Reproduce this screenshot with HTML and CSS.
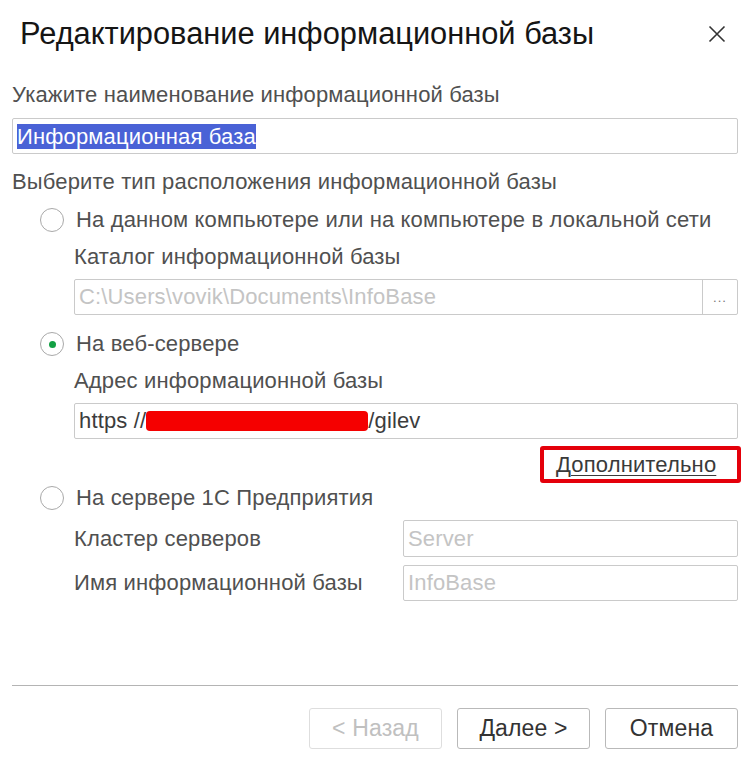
FILE: index.html
```html
<!DOCTYPE html>
<html lang="ru">
<head>
  <meta charset="UTF-8" />
  <title>Редактирование информационной базы</title>
  <link rel="stylesheet" href="styles.css">
</head>
<body>
  <div class="dialog">
    <!-- Заголовок окна -->
    <div class="header">
      <h1 class="title">Редактирование информационной базы</h1>
      <span class="close">
        <svg width="18" height="18" viewBox="0 0 18 18">
          <path d="M1.5 1.5 L16.5 16.5 M16.5 1.5 L1.5 16.5" stroke="#333" stroke-width="1.6" fill="none"/>
        </svg>
      </span>
    </div>

    <div class="caption">Укажите наименование информационной базы</div>
    <div class="field name-field"><span class="selected">Информационная база</span></div>

    <div class="caption caption-type">Выберите тип расположения информационной базы</div>

    <!-- Вариант 1: файловая база -->
    <div class="radio-row row-file">
      <span class="radio"></span>
      <span class="radio-text">На данном компьютере или на компьютере в локальной сети</span>
    </div>
    <div class="sub">
      <div class="caption sub-caption">Каталог информационной базы</div>
      <div class="field field-choice">
        <span class="value disabled">C:\Users\vovik\Documents\InfoBase</span>
        <span class="choice-btn">...</span>
      </div>
    </div>

    <!-- Вариант 2: веб-сервер -->
    <div class="radio-row row-web">
      <span class="radio checked"></span>
      <span class="radio-text">На веб-сервере</span>
    </div>
    <div class="sub">
      <div class="caption sub-caption">Адрес информационной базы</div>
      <div class="field address-field">https //<span class="redact"></span>/gilev</div>
      <div class="more-row">
        <span class="more-box"><a class="more" href="#">Дополнительно</a></span>
      </div>
    </div>

    <!-- Вариант 3: сервер 1С -->
    <div class="radio-row row-server">
      <span class="radio"></span>
      <span class="radio-text">На сервере 1С Предприятия</span>
    </div>
    <div class="sub">
      <div class="pair pair-first">
        <span class="pair-label">Кластер серверов</span>
        <div class="field pair-field"><span class="disabled">Server</span></div>
      </div>
      <div class="pair">
        <span class="pair-label">Имя информационной базы</span>
        <div class="field pair-field"><span class="disabled">InfoBase</span></div>
      </div>
    </div>

    <div class="separator"></div>

    <div class="buttons">
      <span class="btn btn-disabled">&lt; Назад</span>
      <span class="btn">Далее &gt;</span>
      <span class="btn">Отмена</span>
    </div>
  </div>
</body>
</html>
```

FILE: styles.css
```css
/* Окно редактирования базы */
body {
  margin: 0;
  background: #fff;
  font-family: "Liberation Sans", Arial, sans-serif;
  color: #505050;
  letter-spacing: 0.15px;
}

.dialog {
  width: 750px;
  height: 763px;
  padding: 0 12px;
  box-sizing: border-box;
}

.header {
  height: 80px;
  display: flex;
  align-items: flex-start;
  justify-content: space-between;
}

.title {
  margin: 16px 0 0 8px;
  font-size: 30.8px;
  line-height: 36px;
  font-weight: normal;
  color: #151515;
  letter-spacing: 0;
}

.close {
  margin: 25px 12px 0 0;
  width: 18px;
  height: 18px;
}

.caption {
  font-size: 22px;
  line-height: 30px;
  height: 30px;
  white-space: nowrap;
}

.field {
  height: 36px;
  border: 1px solid #cacaca;
  border-radius: 2px;
  box-sizing: border-box;
  display: flex;
  align-items: center;
  padding: 0 4px;
  font-size: 22px;
  color: #3c3c3c;
  white-space: nowrap;
}

.name-field {
  margin-top: 8px;
}

.selected {
  background: #4a62d6;
  color: #fff;
  line-height: 25px;
}

.caption-type {
  margin-top: 13px;
}

.radio-row {
  height: 30px;
  display: flex;
  align-items: center;
  padding-left: 28px;
}

.row-file {
  margin-top: 8px;
}

.row-web {
  margin-top: 14px;
}

.radio {
  width: 24px;
  height: 24px;
  border: 1.5px solid #a9a9a9;
  border-radius: 50%;
  box-sizing: border-box;
  display: flex;
  align-items: center;
  justify-content: center;
  margin-right: 12px;
}

.radio.checked::after {
  content: "";
  width: 7px;
  height: 7px;
  border-radius: 50%;
  background: #12a044;
}

.radio-text {
  font-size: 22px;
  white-space: nowrap;
}

.sub {
  padding-left: 62px;
}

.sub-caption {
  margin-top: 7px;
}

.field-choice {
  margin-top: 7px;
  padding-right: 0;
  justify-content: space-between;
}

.disabled {
  color: #c4c4c4;
}

.choice-btn {
  width: 35px;
  height: 34px;
  border-left: 1px solid #cacaca;
  display: flex;
  align-items: flex-end;
  justify-content: center;
  padding-bottom: 9px;
  box-sizing: border-box;
  font-size: 13px;
  letter-spacing: 1px;
  color: #777;
}

.address-field {
  margin-top: 7px;
}

.redact {
  display: inline-block;
  width: 222px;
  height: 20px;
  background: #f50000;
  border-radius: 4px;
}

.more-row {
  margin-top: 7px;
  height: 37px;
  display: flex;
  justify-content: flex-end;
  margin-right: -3px;
}

.more-box {
  width: 201px;
  height: 37px;
  border: 4px solid #e4000a;
  border-radius: 3px;
  box-sizing: border-box;
  display: flex;
  align-items: center;
  padding-left: 12px;
}

.more {
  font-size: 22px;
  color: #3a3a3a;
  text-decoration: underline;
  text-underline-offset: 3px;
  text-decoration-thickness: 1px;
}

.pair {
  display: flex;
  align-items: center;
  margin-top: 8px;
}

.pair-first {
  margin-top: 7px;
}

.pair-label {
  width: 329px;
  font-size: 22px;
  white-space: nowrap;
}

.pair-field {
  flex: 1;
}

.pair-first .pair-field {
  height: 37px;
}

.separator {
  margin-top: 84px;
  height: 1px;
  background: #b4b4b4;
}

.buttons {
  margin-top: 22px;
  display: flex;
  justify-content: flex-end;
  gap: 15px;
}

.btn {
  width: 133px;
  height: 41px;
  border: 1px solid #b9b9b9;
  border-radius: 3px;
  box-sizing: border-box;
  display: flex;
  align-items: center;
  justify-content: center;
  font-size: 23px;
  color: #333;
  background: #fff;
}

.btn-disabled {
  color: #c0c0c0;
  border-color: #dedede;
}
```
